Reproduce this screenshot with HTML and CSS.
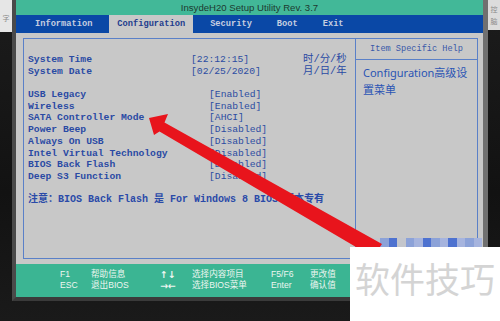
FILE: index.html
```html
<!DOCTYPE html>
<html lang="zh">
<head>
  <meta charset="UTF-8" />
  <title>InsydeH20 Setup Utility</title>
  <link rel="stylesheet" href="styles.css">
</head>
<body>
  <div class="desk">
    <div class="side left">
      <div class="patch">字</div>
    </div>

    <div class="screen">
      <div class="title">InsydeH20 Setup Utility Rev. 3.7</div>

      <div class="tabs">
        <span class="tab">Information</span>
        <span class="tab active">Configuration</span>
        <span class="tab">Security</span>
        <span class="tab">Boot</span>
        <span class="tab">Exit</span>
      </div>

      <div class="main">
        <div class="frame">
          <div class="items">
            <div class="row"><span class="label">System Time</span><span class="val">[22:12:15]</span><span class="unit">时/分/秒</span></div>
            <div class="row"><span class="label">System Date</span><span class="val">[02/25/2020]</span><span class="unit">月/日/年</span></div>
            <div class="blank"></div>
            <div class="row"><span class="label">USB Legacy</span><span class="val ind">[Enabled]</span></div>
            <div class="row"><span class="label">Wireless</span><span class="val ind">[Enabled]</span></div>
            <div class="row"><span class="label">SATA Controller Mode</span><span class="val ind">[AHCI]</span></div>
            <div class="row"><span class="label">Power Beep</span><span class="val ind">[Disabled]</span></div>
            <div class="row"><span class="label">Always On USB</span><span class="val ind">[Disabled]</span></div>
            <div class="row"><span class="label">Intel Virtual Technology</span><span class="val ind">[Disabled]</span></div>
            <div class="row"><span class="label">BIOS Back Flash</span><span class="val ind">[Disabled]</span></div>
            <div class="row"><span class="label">Deep S3 Function</span><span class="val ind">[Disabled]</span></div>
            <div class="blank"></div>
            <div class="note">注意：BIOS Back Flash 是 For Windows 8 BIOS 版本专有</div>
          </div>

          <div class="help">
            <div class="help-head">Item Specific Help</div>
            <div class="help-body">Configuration高级设置菜单</div>
          </div>
        </div>
      </div>

      <div class="footer">
        <div>F1</div><div>帮助信息</div><div class="keys">↑↓</div><div>选择内容项目</div><div>F5/F6</div><div>更改值</div>
        <div>ESC</div><div>退出BIOS</div><div class="keys">→←</div><div>选择BIOS菜单</div><div>Enter</div><div>确认值</div>
      </div>
    </div>

    <div class="side right">
      <div class="patch">控<br>脑</div>
    </div>
  </div>

  <!-- blurred bits of the original picture under the watermark -->
  <div class="mosaic">
    <span class="m m0"></span><span class="m m4"></span><span class="m m1"></span><span class="m m2"></span>
    <span class="m m4"></span><span class="m m1"></span><span class="m m3"></span><span class="m m2"></span>
    <span class="m m1"></span><span class="m m3"></span><span class="m m2"></span><span class="m m3"></span>
    <span class="m m1"></span><span class="m m3"></span>
  </div>

  <svg class="arrow" width="500" height="321" viewBox="0 0 500 321">
    <polygon points="149,118 168,114 164.5,122.5 382,244 373,257 159.5,131.5 154,135" fill="#e8141c"/>
  </svg>

  <div class="watermark">软件技巧</div>
</body>
</html>
```

FILE: styles.css
```css
body {
  margin: 0;
  background: #161616;
  width: 500px;
  height: 321px;
  overflow: hidden;
  position: relative;
}

.desk {
  display: flex;
  height: 321px;
  background: linear-gradient(180deg, #1c1c1c 0%, #121212 60%, #1a1a1a 100%);
}

.side {
  flex: 1;
}

.patch {
  background: #e6e6e6;
  color: #8a8a8a;
  font-family: "Noto Sans CJK SC", sans-serif;
  font-size: 7px;
  line-height: 12px;
  height: 32px;
  padding-top: 12px;
  box-sizing: border-box;
  text-align: center;
}

.side.right .patch {
  background: #dcdcdc;
  padding-top: 3px;
  height: 30px;
}

.screen {
  width: 467px;
  height: 297px;
  display: flex;
  flex-direction: column;
  border-left: 4px solid #4a4a4a;
  border-right: 5px solid #707070;
  border-bottom: 4px solid #3a3a3a;
  background: #c8c8c8;
}

.title {
  height: 15px;
  line-height: 15px;
  background: #42b898;
  color: #1d3a30;
  text-align: center;
  font-family: "Liberation Sans", Arial, sans-serif;
  font-size: 9.6px;
}

.tabs {
  height: 18px;
  background: #0a48a6;
  display: flex;
  padding-left: 11px;
  font-family: "Liberation Mono", monospace;
  font-weight: bold;
  font-size: 8.7px;
  line-height: 18px;
}

.tab {
  padding: 0 8px;
  margin-right: 9px;
  color: #c6cee0;
}

.tab.active {
  background: #c8c8c8;
  color: #1e3c8e;
}

.main {
  flex: 1;
  padding: 5px 5px 5px 7px;
  display: flex;
}

.frame {
  flex: 1;
  display: flex;
  border: 1px solid #5a80c8;
}

.items {
  width: 327px;
  padding: 15px 0 0 4px;
  font-family: "Liberation Mono", "Noto Sans CJK SC", monospace;
  font-size: 9.7px;
  color: #2a4aa4;
}

.row {
  display: flex;
  height: 11.7px;
  line-height: 11.7px;
  white-space: nowrap;
}

.blank {
  height: 11.7px;
}

.label {
  width: 163px;
  font-weight: bold;
}

.val {
  width: 110px;
  color: #2c4ca2;
}

.val.ind {
  padding-left: 18px;
}

.unit {
  font-size: 10.4px;
  color: #2a4aa4;
  padding-left: 2px;
}

.note {
  font-size: 10px;
  line-height: 11.7px;
  font-weight: bold;
  white-space: nowrap;
  color: #2a4aa8;
}

.help {
  flex: 1;
  border-left: 1px solid #5a80c8;
}

.help-head {
  height: 20px;
  line-height: 21px;
  border-bottom: 1px solid #5a80c8;
  text-align: center;
  font-family: "Liberation Mono", monospace;
  font-size: 8.6px;
  color: #3a58a8;
}

.help-body {
  padding: 4px 8px 0 7px;
  font-family: "Noto Sans", "Noto Sans CJK SC", sans-serif;
  font-size: 11px;
  line-height: 17px;
  color: #2a54b4;
}

.footer {
  height: 33px;
  box-sizing: border-box;
  background: #3bb593;
  padding: 5px 0 0 44px;
  display: grid;
  grid-template-columns: 31px 69px 32px 79px 39px auto;
  grid-auto-rows: 11px;
  font-family: "Liberation Sans", "Noto Sans CJK SC", sans-serif;
  font-size: 8.6px;
  line-height: 11px;
  color: #eef6f1;
}

.footer .keys {
  font-family: "DejaVu Sans", sans-serif;
  font-weight: bold;
  font-size: 9.5px;
}

.mosaic {
  position: absolute;
  left: 363px;
  top: 238px;
  height: 9px;
  display: flex;
}

.m {
  width: 8.5px;
  height: 9px;
}

.m0 { background: #b4bcd4; }
.m1 { background: #8ca2d8; }
.m2 { background: #4e72d0; }
.m3 { background: #a6b4de; }
.m4 { background: #c4c6cc; }

.arrow {
  position: absolute;
  left: 0;
  top: 0;
}

.watermark {
  position: absolute;
  left: 350px;
  top: 247px;
  width: 150px;
  height: 74px;
  box-sizing: border-box;
  background: #fff;
  padding: 11px 0 0 5px;
  font-family: "Noto Sans CJK SC", sans-serif;
  font-size: 35px;
  line-height: 40px;
  color: #d4d4d4;
  white-space: nowrap;
}
```
